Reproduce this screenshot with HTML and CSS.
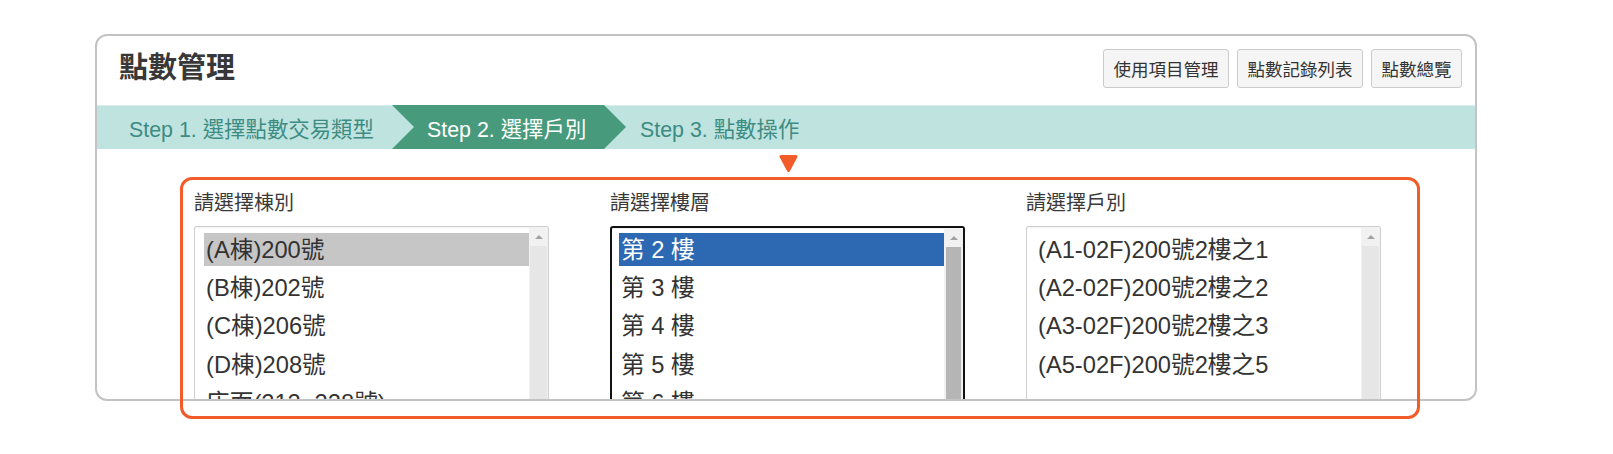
FILE: index.html
```html
<!DOCTYPE html>
<html lang="zh-Hant">
<head>
  <meta charset="UTF-8">
  <title>點數管理</title>
  <link rel="stylesheet" href="styles.css">
</head>
<body>

<div class="stage">
  <div class="panel">
    <div class="panel-head">
      <h3 class="panel-title">點數管理</h3>
      <div class="head-btns">
        <button class="btn">使用項目管理</button>
        <button class="btn">點數記錄列表</button>
        <button class="btn">點數總覽</button>
      </div>
    </div>

    <div class="steps">
      <div class="step step-one">Step 1. 選擇點數交易類型</div>
      <div class="step step-active">Step 2. 選擇戶別</div>
      <div class="step step-three">Step 3. 點數操作</div>
    </div>

    <div class="panel-body">
      <div class="pick">
        <div class="pick-label">請選擇棟別</div>
        <div class="listbox">
          <div class="opts">
            <div class="opt opt-sel-gray">(A棟)200號</div>
            <div class="opt">(B棟)202號</div>
            <div class="opt">(C棟)206號</div>
            <div class="opt">(D棟)208號</div>
            <div class="opt">店面(212~228號)</div>
          </div>
          <div class="sbar"><div class="sbar-up"></div><div class="sbar-thumb"></div></div>
        </div>
      </div>

      <div class="pick">
        <div class="pick-label">請選擇樓層</div>
        <div class="listbox listbox-focus">
          <div class="opts">
            <div class="opt opt-sel">第 2 樓</div>
            <div class="opt">第 3 樓</div>
            <div class="opt">第 4 樓</div>
            <div class="opt">第 5 樓</div>
            <div class="opt">第 6 樓</div>
          </div>
          <div class="sbar"><div class="sbar-up"></div><div class="sbar-thumb dark"></div></div>
        </div>
      </div>

      <div class="pick">
        <div class="pick-label">請選擇戶別</div>
        <div class="listbox">
          <div class="opts">
            <div class="opt">(A1-02F)200號2樓之1</div>
            <div class="opt">(A2-02F)200號2樓之2</div>
            <div class="opt">(A3-02F)200號2樓之3</div>
            <div class="opt">(A5-02F)200號2樓之5</div>
          </div>
          <div class="sbar"><div class="sbar-up"></div><div class="sbar-thumb"></div></div>
        </div>
      </div>
    </div>
  </div>

  <!-- 標註：橘色框與箭頭 -->
  <svg class="mark-arrow" width="21" height="19" viewBox="0 0 21 19">
    <path d="M3 2.5 H18 L10.5 16.5 Z" fill="#f25c2a" stroke="#f25c2a" stroke-width="3" stroke-linejoin="round"/>
  </svg>
  <div class="mark-box"></div>
</div>

</body>
</html>
```

FILE: styles.css
```css
body {
  margin: 0;
  background: #fff;
  color: #333;
  font-family: "Liberation Sans", "Noto Sans CJK TC", sans-serif;
}
.stage {
  position: relative;
  width: 1382px;
  height: 390px;
  margin: 34px 0 0 95px;
}
.panel {
  height: 367px;
  box-sizing: border-box;
  border: 2px solid #c3c3c5;
  border-radius: 12px;
  overflow: hidden;
  background: #fff;
}
.panel-head {
  height: 68px;
  box-sizing: border-box;
  padding: 12px 13px 16px 22px;
  display: flex;
  justify-content: space-between;
  align-items: center;
}
.panel-title {
  margin: 0;
  font-size: 29px;
  line-height: 40px;
  font-weight: bold;
  color: #383838;
}
.head-btns {
  display: flex;
  gap: 8px;
}
.btn {
  height: 39px;
  padding: 0 9.5px;
  font-family: inherit;
  font-size: 17.5px;
  color: #333;
  background: #f5f5f5;
  border: 1px solid #cbcbcb;
  border-radius: 3px;
}

/* 步驟列 */
.steps {
  display: flex;
  height: 44px;
  margin-top: 1px;
  background: #bfe3df;
  box-shadow: inset 0 1px 0 #d9efec;
}
.step {
  display: flex;
  align-items: center;
  font-size: 21.4px;
  color: #3d8c83;
  white-space: nowrap;
}
.step-one {
  width: 295px;
  box-sizing: border-box;
  padding-left: 32px;
}
.step-active {
  width: 234px;
  box-sizing: border-box;
  padding-left: 35px;
  background: #479a7b;
  color: #fff;
  clip-path: polygon(0 0, calc(100% - 22px) 0, 100% 50%, calc(100% - 22px) 100%, 0 100%, 22px 50%);
}
.step-three {
  padding-left: 14px;
}

/* 選擇欄 */
.panel-body {
  display: flex;
  gap: 61px;
  padding: 41.5px 0 0 97px;
}
.pick {
  width: 355px;
}
.pick-label {
  font-size: 20px;
  line-height: 24px;
  color: #3a3a3a;
  margin-bottom: 11.5px;
}
.listbox {
  display: flex;
  height: 230px;
  box-sizing: border-box;
  border: 1px solid #cfcfcf;
  border-radius: 2px;
  box-shadow: inset 0 1px 1px rgba(0, 0, 0, 0.06);
}
.listbox-focus {
  border: 2px solid #111;
  border-radius: 3px;
}
.opts {
  flex: 1;
  padding: 6px 0 0 9px;
}
.listbox-focus .opts {
  padding: 5px 0 0 7px;
}
.opt {
  height: 33px;
  line-height: 34px;
  margin-bottom: 5.2px;
  padding: 0 2px;
  font-size: 23.7px;
  color: #333;
  white-space: nowrap;
}
.opt-sel-gray {
  background: #c6c6c7;
}
.opt-sel {
  background: #2c69b2;
  color: #fff;
}
.sbar {
  width: 19px;
  display: flex;
  flex-direction: column;
  background: #f1f1f1;
}
.sbar-up {
  height: 19px;
  display: flex;
  justify-content: center;
  align-items: center;
}
.sbar-up::before {
  content: "";
  border-left: 4px solid transparent;
  border-right: 4px solid transparent;
  border-bottom: 4px solid #a3a3a3;
}
.sbar-thumb {
  flex: 1;
  margin: 0 1px;
  background: #e6e6e6;
}
.sbar-thumb.dark {
  margin: 0 2px;
  background: #b5b5b5;
}

/* 標註 */
.mark-arrow {
  position: absolute;
  left: 683px;
  top: 120px;
}
.mark-box {
  position: absolute;
  left: 85px;
  top: 143px;
  width: 1240px;
  height: 242px;
  box-sizing: border-box;
  border: 3px solid #f25c2a;
  border-radius: 12px;
  pointer-events: none;
}
```
